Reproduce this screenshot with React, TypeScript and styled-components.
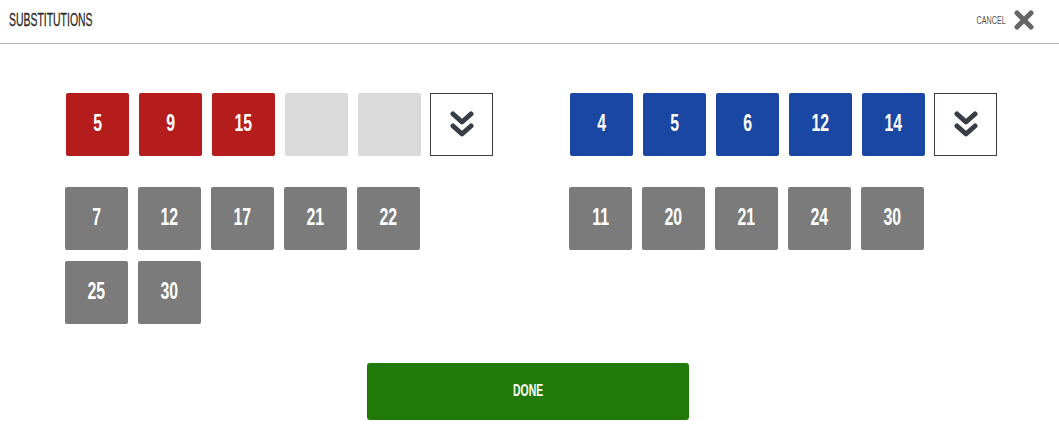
import React from 'react'
import styled, { createGlobalStyle } from 'styled-components'

type TeamColor = 'red' | 'blue'

const colors: Record<TeamColor, string> = {
  red: '#b51c1c',
  blue: '#1a47a3',
}

const teams: { color: TeamColor; onField: number[]; empty: number; bench: number[] }[] = [
  { color: 'red', onField: [5, 9, 15], empty: 2, bench: [7, 12, 17, 21, 22, 25, 30] },
  { color: 'blue', onField: [4, 5, 6, 12, 14], empty: 0, bench: [11, 20, 21, 24, 30] },
]

const Chevrons = () => (
  <svg width="24" height="30" viewBox="0 0 24 30">
    <g fill="none" stroke="#393e46" strokeWidth="5" strokeLinecap="round" strokeLinejoin="round">
      <polyline points="3,4 12,12 21,4" />
      <polyline points="3,16 12,24 21,16" />
    </g>
  </svg>
)

const App = () => {
  return (
    <Page>
      <GlobalStyle />
      <Header.Bar>
        <Header.Title>SUBSTITUTIONS</Header.Title>
        <Header.Cancel>
          <Header.CancelText>CANCEL</Header.CancelText>
          <svg width="20" height="20" viewBox="0 0 20 20">
            <g stroke="#666" strokeWidth="5" strokeLinecap="round">
              <line x1="3" y1="3" x2="17" y2="17" />
              <line x1="17" y1="3" x2="3" y2="17" />
            </g>
          </svg>
        </Header.Cancel>
      </Header.Bar>

      <Body>
        {teams.map((t) => (
          <Team key={t.color}>
            <Field>
              {t.onField.map((n, i) => (
                <Tile key={i} $bg={colors[t.color]}>
                  <Num>{n}</Num>
                </Tile>
              ))}
              {Array.from({ length: t.empty }).map((_, i) => (
                <Tile key={'e' + i} $bg="#dadada" />
              ))}
              <MoreBox>
                <Chevrons />
              </MoreBox>
            </Field>
            <Bench>
              {t.bench.map((n, i) => (
                <Tile key={i} $bg="#7b7b7b">
                  <Num>{n}</Num>
                </Tile>
              ))}
            </Bench>
          </Team>
        ))}
      </Body>

      <Footer>
        <DoneButton>
          <DoneText>DONE</DoneText>
        </DoneButton>
      </Footer>
    </Page>
  )
}

const GlobalStyle = createGlobalStyle`
  *, *::before, *::after { box-sizing: border-box; }
  html, body { margin: 0; padding: 0; background: #fff; }
  body {
    font-family: "Liberation Sans Narrow", "Liberation Sans", Arial, sans-serif;
  }
`

const Page = styled.div`
  width: 1059px;
  height: 442px;
  background: #fff;
`

const Header = {
  Bar: styled.header`
    height: 44px;
    border-bottom: 1px solid #b3b3b3;
    display: flex;
    align-items: center;
    justify-content: space-between;
    padding: 0 25px 0 9px;
  `,
  Title: styled.h1`
    margin: 0;
    font-size: 18px;
    font-weight: 400;
    color: #2a2a2a;
    display: inline-block;
    transform: scaleX(0.58);
    transform-origin: left center;
    margin-top: -2px;
    -webkit-text-stroke: 0.3px #2a2a2a;
  `,
  Cancel: styled.div`
    display: flex;
    align-items: center;
    gap: 8px;
    margin-top: -4px;
  `,
  CancelText: styled.span`
    font-size: 11px;
    color: #555;
    display: inline-block;
    transform: scaleX(0.65);
    transform-origin: right center;
  `,
}

const Body = styled.main`
  display: flex;
  gap: 77px;
  padding: 49px 0 0 66px;
  height: 319px;
`

const Team = styled.section`
  display: flex;
  flex-direction: column;
  gap: 31px;
`

const Field = styled.div`
  display: flex;
  gap: 10px;
`

const Bench = styled.div`
  display: grid;
  grid-template-columns: repeat(5, 63px);
  gap: 11px 10px;
  margin-left: -1px;
`

const Tile = styled.div<{ $bg: string }>`
  width: 63px;
  height: 63px;
  border-radius: 2px;
  background: ${(p) => p.$bg};
  display: flex;
  align-items: center;
  justify-content: center;
`

const Num = styled.span`
  color: #fff;
  font-size: 24px;
  font-weight: 700;
  display: inline-block;
  transform: scaleX(0.66);
  margin-top: -3px;
`

const MoreBox = styled.div`
  width: 63px;
  height: 63px;
  margin-left: -1px;
  border: 1px solid #3a3f47;
  display: flex;
  align-items: center;
  justify-content: center;
`

const Footer = styled.footer`
  display: flex;
  justify-content: center;
  padding-right: 3px;
`

const DoneButton = styled.button`
  width: 322px;
  height: 57px;
  border: none;
  border-radius: 3px;
  background: #217a07;
  display: flex;
  align-items: center;
  justify-content: center;
  cursor: pointer;
`

const DoneText = styled.span`
  color: #fff;
  font-family: "Liberation Sans Narrow", "Liberation Sans", Arial, sans-serif;
  font-size: 16px;
  font-weight: 700;
  display: inline-block;
  transform: scaleX(0.65);
  margin-top: -2px;
`

export default App
